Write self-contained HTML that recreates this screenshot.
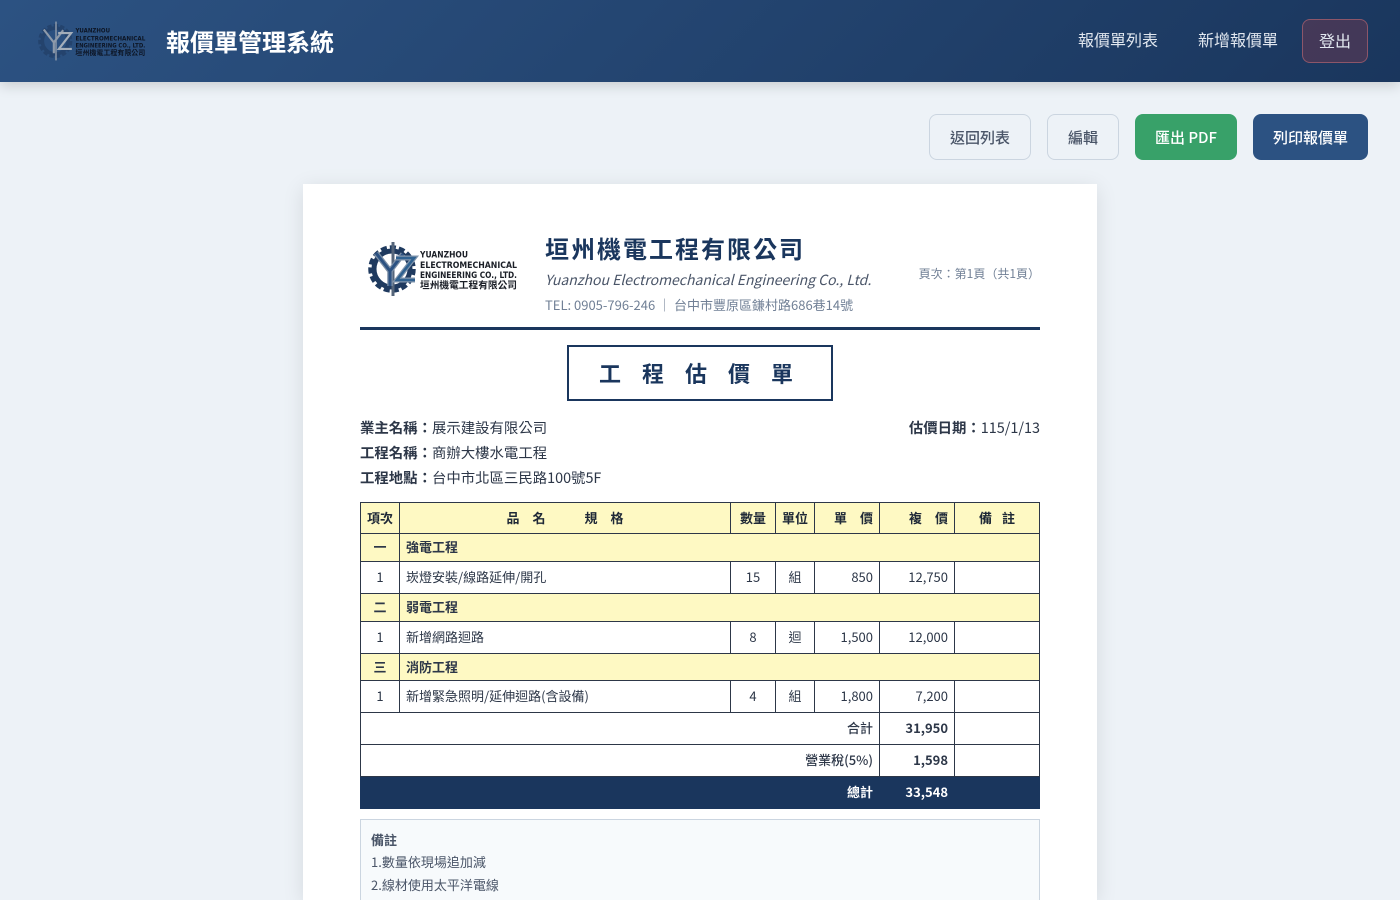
<!DOCTYPE html>
<html lang="zh-Hant">
<head>
<meta charset="utf-8">
<title>報價單管理系統</title>
<style>
*{box-sizing:border-box}
html,body{margin:0;padding:0;width:1400px;height:900px;overflow:hidden;background:#edf2f7}
body{font-family:"Noto Sans CJK TC","Liberation Sans",sans-serif;position:relative;color:#2d3748}
.abs{position:absolute;white-space:nowrap}
header{position:absolute;left:0;top:0;width:1400px;height:82px;background:linear-gradient(135deg,#2c5282,#1a365d);box-shadow:0 4px 12px rgba(0,0,0,.15);z-index:2}
.brand{left:166px;top:23px;font-size:24px;line-height:35px;font-weight:700;color:#fff;letter-spacing:0}
.nav{top:28px;font-size:16px;line-height:23px;color:#e2e8f0}
.logout{left:1302px;top:19px;width:66px;height:44px;border:1px solid rgba(252,129,129,.4);border-radius:8px;background:rgba(229,62,62,.2);color:#e2e8f0;font-size:16px;line-height:40px;text-align:center}
.btn{top:114px;height:46px;border-radius:8px;font-size:15px;font-weight:500;line-height:48px;text-align:center}
.ghost{background:#edf2f7;border:1px solid #cbd5e0;color:#4a5568;line-height:45px}
.paper{position:absolute;left:303px;top:184px;width:794px;height:716px;background:#fff;box-shadow:0 4px 20px rgba(0,0,0,.1)}
.cname{left:545px;top:230px;font-size:24px;line-height:35px;font-weight:700;color:#1a365d;letter-spacing:2px}
.en{left:545px;top:270px;font-size:14px;line-height:20px;font-style:italic;color:#4a5568}
.tel{left:545px;top:295px;font-size:13px;line-height:20px;color:#718096}
.page{right:360px;top:265px;font-size:12px;line-height:18px;color:#718096}
.rule{left:360px;top:327px;width:680px;height:3px;background:#1a365d}
.title{left:567px;top:345px;width:266px;height:56px;border:2px solid #1a365d;color:#1a365d;font-size:22px;font-weight:700;line-height:52px;text-align:left;padding-left:30px;letter-spacing:21px}
.info{font-size:14.4px;line-height:20px;color:#2d3748}
.info b{font-weight:700}
table{position:absolute;left:360px;top:502px;width:679px;border-collapse:collapse;table-layout:fixed;font-size:13px;color:#2d3748}
td,th{border:1px solid #2d3748;padding:0 6px 2px;line-height:18px;overflow:hidden;white-space:nowrap}
th{background:#fef9c3;font-size:13px;font-weight:700;text-align:center;color:#1f2937;padding:0 2px}
.cat td{background:#fef9c3;font-weight:700;font-size:13px}
.cat3 td{padding-bottom:0}
.c{text-align:center}.r{text-align:right}
.sum td:first-child{font-weight:500}
.sum b{font-weight:700;font-size:13px}
.tot td{background:#1a365d;color:#fff;border-color:#1a365d}
.tot td+td{border-left-color:#2d3748}
.notes{position:absolute;left:360px;top:819px;width:680px;height:81px;background:#f7fafc;border:1px solid #cbd5e0;border-bottom:0;padding:9px 10px 0;font-size:13px;color:#4a5568}
.notes div{line-height:22px;height:22px}
.notes div+div+div{height:23px;margin-top:1px}
.notes b{font-weight:700;color:#4a5568}
svg{position:absolute;overflow:visible}
</style>
</head>
<body>
<header>
<svg style="left:38px;top:22px" width="108" height="38" viewBox="0 0 150 52">
<g fill="none">
<circle cx="24" cy="26" r="21.5" stroke="#24436d" stroke-width="4.5" stroke-dasharray="6 3"/>
<circle cx="24" cy="26" r="18" stroke="#24436d" stroke-width="5"/>
<path d="M25 -1V53" stroke="#8f9bab" stroke-width="2"/>
<path d="M8 10L22 28V43M35 11L22 28" stroke="#8e9aaa" stroke-width="3"/>
<path d="M28 15H46L29 37H47" stroke="#a4aeba" stroke-width="3"/>
</g>
<g font-family="'DejaVu Sans',sans-serif" font-weight="700" fill="#0d1626" font-size="8.6">
<text x="52" y="14.5" textLength="48" lengthAdjust="spacingAndGlyphs">YUANZHOU</text>
<text x="52" y="25" textLength="97" lengthAdjust="spacingAndGlyphs">ELECTROMECHANICAL</text>
<text x="52" y="35" textLength="97" lengthAdjust="spacingAndGlyphs">ENGINEERING CO., LTD.</text>
<text x="52" y="45.5" font-family="'Noto Sans CJK TC',sans-serif" font-size="9.6" textLength="97" lengthAdjust="spacingAndGlyphs">垣州機電工程有限公司</text>
</g>
</svg>
<div class="abs brand">報價單管理系統</div>
<div class="abs nav" style="left:1078px">報價單列表</div>
<div class="abs nav" style="left:1198px">新增報價單</div>
<div class="abs logout">登出</div>
</header>

<div class="abs btn ghost" style="left:929px;width:102px">返回列表</div>
<div class="abs btn ghost" style="left:1047px;width:72px">編輯</div>
<div class="abs btn" style="left:1135px;width:102px;background:#38a169;color:#fff">匯出 PDF</div>
<div class="abs btn" style="left:1253px;width:115px;background:#2c5282;color:#fff">列印報價單</div>

<div class="paper"></div>

<svg style="left:368px;top:243px" width="150" height="52" viewBox="0 0 150 52">
<g fill="none">
<circle cx="24" cy="26" r="21.5" stroke="#1f3a5f" stroke-width="4.5" stroke-dasharray="6 3"/>
<circle cx="24" cy="26" r="18" stroke="#1f3a5f" stroke-width="5"/>
<path d="M25 -1V53" stroke="#55657a" stroke-width="3"/>
<path d="M8 10L22 28V43M35 11L22 28" stroke="#7b8ea5" stroke-width="5.5"/>
<path d="M8 10L22 28V43M35 11L22 28" stroke="#2c5282" stroke-width="3"/>
<path d="M28 15H46L29 37H47" stroke="#8296ac" stroke-width="5"/>
<path d="M28 15H46L29 37H47" stroke="#2f6190" stroke-width="2.6"/>
</g>
<g font-family="'DejaVu Sans',sans-serif" font-weight="700" fill="#1b1f27" font-size="8.8">
<text x="52" y="14.5" textLength="48" lengthAdjust="spacingAndGlyphs">YUANZHOU</text>
<text x="52" y="25" textLength="97" lengthAdjust="spacingAndGlyphs">ELECTROMECHANICAL</text>
<text x="52" y="35" textLength="97" lengthAdjust="spacingAndGlyphs">ENGINEERING CO., LTD.</text>
<text x="52" y="45.5" font-family="'Noto Sans CJK TC',sans-serif" font-size="9.6" textLength="97" lengthAdjust="spacingAndGlyphs">垣州機電工程有限公司</text>
</g>
</svg>

<div class="abs cname">垣州機電工程有限公司</div>
<div class="abs en">Yuanzhou Electromechanical Engineering Co., Ltd.</div>
<div class="abs tel">TEL: 0905-796-246 ｜ 台中市豐原區鎌村路686巷14號</div>
<div class="abs page">頁次：第1頁（共1頁）</div>
<div class="abs rule"></div>
<div class="abs title">工程估價單</div>

<div class="abs info" style="left:360px;top:418px"><b>業主名稱：</b>展示建設有限公司</div>
<div class="abs info" style="left:360px;top:443px"><b>工程名稱：</b>商辦大樓水電工程</div>
<div class="abs info" style="left:360px;top:468px"><b>工程地點：</b>台中市北區三民路100號5F</div>
<div class="abs info" style="right:360px;top:418px"><b>估價日期：</b>115/1/13</div>

<table>
<colgroup><col style="width:39px"><col style="width:331px"><col style="width:45px"><col style="width:39px"><col style="width:65px"><col style="width:75px"><col style="width:85px"></colgroup>
<tr style="height:31px"><th>項次</th><th>品　名　　　規　格</th><th>數量</th><th>單位</th><th style="text-align:right;padding-right:6px">單　價</th><th style="text-align:right;padding-right:6px">複　價</th><th>備<span style="display:inline-block;width:10px"></span>註</th></tr>
<tr class="cat" style="height:28px"><td class="c">一</td><td colspan="6">強電工程</td></tr>
<tr style="height:32px"><td class="c">1</td><td>崁燈安裝/線路延伸/開孔</td><td class="c">15</td><td class="c">組</td><td class="r">850</td><td class="r">12,750</td><td></td></tr>
<tr class="cat" style="height:28px"><td class="c">二</td><td colspan="6">弱電工程</td></tr>
<tr style="height:32px"><td class="c">1</td><td>新增網路迴路</td><td class="c">8</td><td class="c">迴</td><td class="r">1,500</td><td class="r">12,000</td><td></td></tr>
<tr class="cat cat3" style="height:27px"><td class="c">三</td><td colspan="6">消防工程</td></tr>
<tr style="height:32px"><td class="c">1</td><td>新增緊急照明/延伸迴路(含設備)</td><td class="c">4</td><td class="c">組</td><td class="r">1,800</td><td class="r">7,200</td><td></td></tr>
<tr class="sum" style="height:32px"><td colspan="5" class="r">合計</td><td class="r"><b>31,950</b></td><td></td></tr>
<tr class="sum" style="height:32px"><td colspan="5" class="r">營業稅(5%)</td><td class="r"><b>1,598</b></td><td></td></tr>
<tr class="sum tot" style="height:32px"><td colspan="5" class="r"><b>總計</b></td><td class="r"><b>33,548</b></td><td></td></tr>
</table>

<div class="notes"><div><b>備註</b></div><div>1.數量依現場追加減</div><div>2.線材使用太平洋電線</div></div>
</body>
</html>
